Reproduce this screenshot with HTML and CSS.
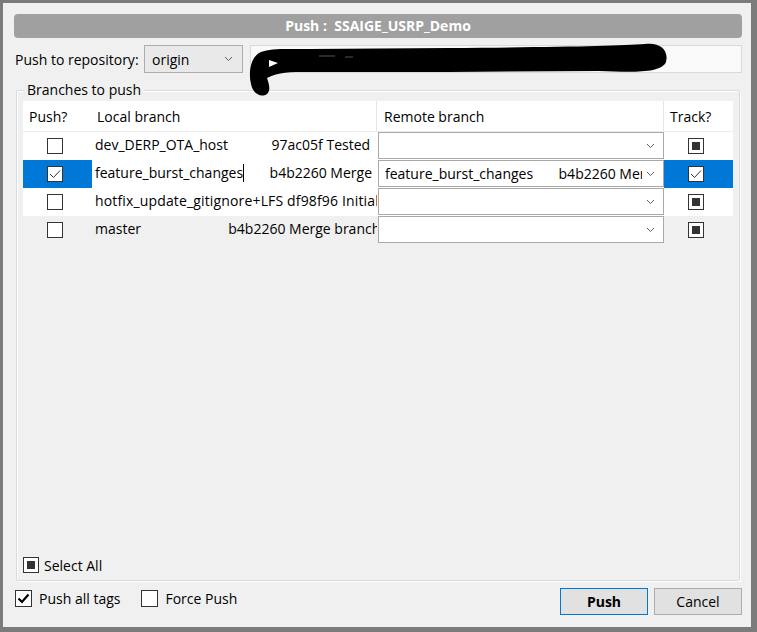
FILE: index.html
```html
<!DOCTYPE html>
<html>
<head>
<meta charset="utf-8">
<link rel="stylesheet" href="styles.css">
</head>
<body>
<div class="dialog">
  <div class="titlebar">Push :&nbsp; SSAIGE_USRP_Demo</div>
  <div class="repo-row">
    <span class="repo-label">Push to repository:</span>
    <div class="combo repo-combo">
      <span class="combo-text">origin</span>
      <svg class="chev" width="9" height="6" viewBox="0 0 9 6"><polyline points="1,1 4.5,4.5 8,1" fill="none" stroke="#606060" stroke-width="1"/></svg>
    </div>
    <div class="url-field"></div>
  </div>

  <div class="group">
    <span class="legend">Branches to push</span>
    <div class="grid">
      <div class="row head">
        <div class="cell c-push">Push?</div>
        <div class="cell c-local sep">Local branch</div>
        <div class="cell c-remote sep">Remote branch</div>
        <div class="cell c-track">Track?</div>
      </div>

      <div class="row white">
        <div class="cell c-push"><span class="cb"></span></div>
        <div class="cell c-local"><span class="txt">dev_DERP_OTA_host            97ac05f Tested</span></div>
        <div class="cell c-remote"><div class="combo cell-combo"><span class="combo-text"></span><svg class="chev" width="9" height="6" viewBox="0 0 9 6"><polyline points="1,1 4.5,4.5 8,1" fill="none" stroke="#606060" stroke-width="1"/></svg></div></div>
        <div class="cell c-track"><span class="cb ind"></span></div>
      </div>

      <div class="row white">
        <div class="cell c-push selected"><span class="cb"><svg width="12" height="10" viewBox="0 0 12 10"><polyline points="1,5 4.5,8.5 11,1.5" fill="none" stroke="#333" stroke-width="1"/></svg></span></div>
        <div class="cell c-local"><span class="txt">feature_burst_changes<span class="caret"></span>       b4b2260 Merge</span></div>
        <div class="cell c-remote"><div class="combo cell-combo"><span class="combo-text">feature_burst_changes       b4b2260 Merge</span><svg class="chev" width="9" height="6" viewBox="0 0 9 6"><polyline points="1,1 4.5,4.5 8,1" fill="none" stroke="#606060" stroke-width="1"/></svg></div></div>
        <div class="cell c-track selected"><span class="cb"><svg width="12" height="10" viewBox="0 0 12 10"><polyline points="1,5 4.5,8.5 11,1.5" fill="none" stroke="#333" stroke-width="1"/></svg></span></div>
      </div>

      <div class="row white">
        <div class="cell c-push"><span class="cb"></span></div>
        <div class="cell c-local"><span class="txt wide">hotfix_update_gitignore+LFS df98f96 Initial</span></div>
        <div class="cell c-remote"><div class="combo cell-combo"><span class="combo-text"></span><svg class="chev" width="9" height="6" viewBox="0 0 9 6"><polyline points="1,1 4.5,4.5 8,1" fill="none" stroke="#606060" stroke-width="1"/></svg></div></div>
        <div class="cell c-track"><span class="cb ind"></span></div>
      </div>

      <div class="row">
        <div class="cell c-push"><span class="cb"></span></div>
        <div class="cell c-local"><span class="txt">master                        b4b2260 Merge branch</span></div>
        <div class="cell c-remote"><div class="combo cell-combo"><span class="combo-text"></span><svg class="chev" width="9" height="6" viewBox="0 0 9 6"><polyline points="1,1 4.5,4.5 8,1" fill="none" stroke="#606060" stroke-width="1"/></svg></div></div>
        <div class="cell c-track"><span class="cb ind"></span></div>
      </div>
    </div>
    <label class="select-all"><span class="cb ind"></span>Select All</label>
  </div>

  <div class="footer">
    <label class="opt"><span class="cb big"><svg width="13" height="11" viewBox="0 0 13 11"><polyline points="1.5,5.5 5,9 11.5,1.5" fill="none" stroke="#000" stroke-width="2.2"/></svg></span>Push all tags</label>
    <label class="opt"><span class="cb big"></span>Force Push</label>
    <div class="spacer"></div>
    <button class="btn primary">Push</button>
    <button class="btn">Cancel</button>
  </div>

  <svg class="scribble" width="430" height="60" viewBox="0 0 430 60">
    <path d="M12 10 C2 14 -1 30 2 42 C4 52 12 56 18 52 C22 48 20 42 18 36 C30 30 40 30 60 30 L200 30 L350 29 C380 30 412 32 417 20 C420 8 411 0 396 2 C370 4 310 5 200 6 L60 7 C38 7 22 6 12 10 Z" fill="#000"/>
    <path d="M20 18 L29 21 L20 25 Z" fill="#fff"/>
    <path d="M70 14 L86 14 M96 15 L104 15" stroke="#555" stroke-width="1"/>
  </svg>
</div>
</body>
</html>
```

FILE: styles.css
```css
html, body {
  margin: 0;
  background: #7b7b7b;
  height: 100%;
}
body {
  font-family: "Open Sans", "Noto Sans", sans-serif;
  font-size: 14px;
  color: #000;
  overflow: hidden;
}
.dialog {
  position: relative;
  margin: 3px 0 0 3px;
  width: 748px;
  height: 624px;
  box-sizing: border-box;
  background: #f0f0f0;
  padding: 11px 9px 12px 11px;
  display: flex;
  flex-direction: column;
}
.titlebar {
  height: 24px;
  background: #a0a0a0;
  border-radius: 4px;
  color: #fff;
  font-weight: bold;
  text-align: center;
  line-height: 24px;
  font-size: 14px;
}
.repo-row {
  margin-top: 7px;
  height: 28px;
  display: flex;
  align-items: center;
}
.repo-label {
  width: 129px;
  padding-left: 1px;
}
.combo {
  box-sizing: border-box;
  display: flex;
  align-items: center;
  border: 1px solid #adadad;
  position: relative;
}
.repo-combo {
  width: 99px;
  height: 28px;
  background: #e9e9e9;
  padding-left: 7px;
}
.combo-text {
  flex: 1;
  white-space: pre;
  overflow: hidden;
}
.chev {
  flex: none;
  margin: 0 9px 0 6px;
}
.url-field {
  margin-left: 7px;
  flex: 1;
  height: 28px;
  box-sizing: border-box;
  background: #f9f9f9;
  border: 1px solid #d9d9d9;
}
.group {
  position: relative;
  margin: 17px 2px 0 2px;
  flex: 1;
  border: 1px solid #d5dbe1;
  box-shadow: inset 1px 1px 0 #fff, 1px 1px 0 #fff;
  border-radius: 2px;
  padding: 10px 6px 7px 6px;
  display: flex;
  flex-direction: column;
}
.legend {
  position: absolute;
  top: -10px;
  left: 7px;
  padding: 0 3px;
  background: #f0f0f0;
  line-height: 18px;
}
.grid {
  flex: 1;
  display: flex;
  flex-direction: column;
}
.row {
  display: grid;
  grid-template-columns: 69px 285px 287px 69px;
  height: 28px;
}
.row.head {
  height: 30px;
  background: #fff;
  border-bottom: 1px solid #ececec;
}
.row.white {
  background: #fff;
}
.cell {
  display: flex;
  align-items: center;
  overflow: hidden;
  white-space: pre;
  box-sizing: border-box;
}
.row .c-push, .row .c-track {
  justify-content: center;
}
.row.head .cell {
  justify-content: flex-start;
  align-items: center;
  padding-left: 6px;
}
.row.head .c-local {
  padding-left: 5px;
}
.row.head .c-remote {
  padding-left: 7px;
}
.row.head .sep {
  border-right: 1px solid #e5e5e5;
}
.row:not(.head) .c-push {
  padding-right: 5px;
}
.row:not(.head) .c-track {
  padding-right: 6px;
}
.row:not(.head) .c-local {
  padding-left: 3px;
  padding-bottom: 3px;
}
.selected {
  background: #0078d7;
}
.txt {
  white-space: pre;
}
.txt.wide {
  letter-spacing: 0.15px;
}
.caret {
  display: inline-block;
  width: 1px;
  height: 18px;
  background: #000;
  vertical-align: middle;
  margin-top: -3px;
}
.row:not(.head) .c-remote {
  align-items: flex-start;
  padding-left: 1px;
}
.cell-combo {
  width: 286px;
  height: 27px;
  background: #fff;
  padding-left: 6px;
  border-color: #a9a9a9;
}
.cell-combo .chev {
  margin: 0 8px 0 4px;
}
.cb {
  box-sizing: border-box;
  width: 16px;
  height: 16px;
  border: 1px solid #333;
  background: #fff;
  display: inline-flex;
  align-items: center;
  justify-content: center;
  flex: none;
}
.cb.ind::after {
  content: "";
  width: 8px;
  height: 8px;
  background: #333;
}
.cb.big {
  width: 17px;
  height: 17px;
}
.select-all {
  display: flex;
  align-items: center;
  height: 16px;
  gap: 5px;
  margin-top: 8px;
}
.footer {
  margin-top: 7px;
  height: 27px;
  display: flex;
  align-items: flex-start;
}
.opt {
  display: flex;
  align-items: center;
  gap: 7px;
  margin-top: 1px;
  margin-left: 1px;
  margin-right: 20px;
}
.spacer {
  flex: 1;
}
.btn {
  font-family: inherit;
  font-size: 14px;
  width: 88px;
  height: 27px;
  background: #e1e1e1;
  border: 1px solid #adadad;
  color: #000;
  padding: 0;
  margin-left: 6px;
}
.btn.primary {
  border-color: #0078d7;
  font-weight: bold;
}
.scribble {
  position: absolute;
  left: 246px;
  top: 39px;
}
```
